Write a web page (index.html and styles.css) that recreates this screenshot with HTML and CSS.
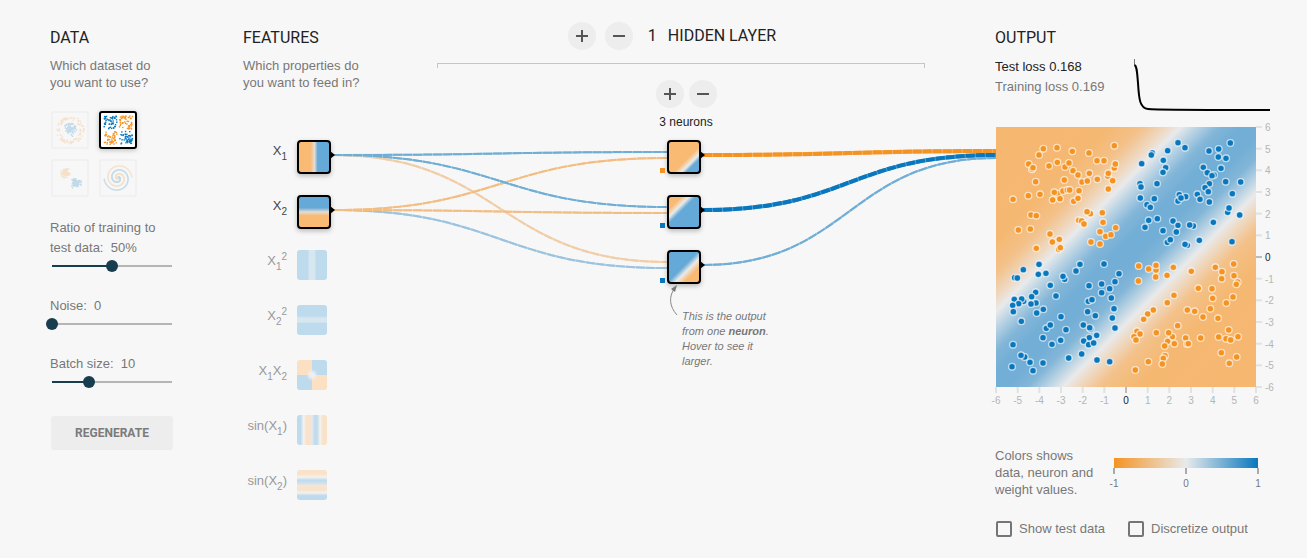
FILE: index.html
```html
<!DOCTYPE html>
<html lang="en">
<head>
<meta charset="utf-8">
<title>Neural network playground</title>
<link rel="stylesheet" href="styles.css">
</head>
<body>
<main class="playground">
  <section class="data">
    <h2>DATA</h2>
    <p class="hint">Which dataset do you want to use?</p>
    <div class="datasets">
      <button class="dataset" aria-label="Circle"><svg id="circle" viewBox="0 0 34 34"></svg></button>
      <button class="dataset selected" aria-label="Exclusive or"><svg id="xor" viewBox="0 0 34 34"></svg></button>
      <button class="dataset" aria-label="Gaussian"><svg id="gauss" viewBox="0 0 34 34"></svg></button>
      <button class="dataset" aria-label="Spiral"><svg id="spiral" viewBox="0 0 34 34"></svg></button>
    </div>
    <div class="sliders">
      <div class="slider">
        <label for="ratio">Ratio of training to test data:&nbsp; 50%</label>
        <input type="range" id="ratio" class="at-half" min="10" max="90" step="10" value="50">
      </div>
      <div class="slider">
        <label for="noise">Noise:&nbsp; 0</label>
        <input type="range" id="noise" class="at-zero" min="0" max="50" step="5" value="0">
      </div>
      <div class="slider">
        <label for="batch">Batch size:&nbsp; 10</label>
        <input type="range" id="batch" class="at-third" min="1" max="30" value="10">
      </div>
    </div>
    <button class="regenerate">REGENERATE</button>
  </section>

  <section class="network">
    <header class="features-head">
      <h2>FEATURES</h2>
      <p class="hint">Which properties do you want to feed in?</p>
    </header>
    <header class="layers-head">
      <div class="layer-count">
        <button class="round" aria-label="Add layer"><svg viewBox="0 0 28 28"><path d="M8 14H20M14 8V20"/></svg></button>
        <button class="round" aria-label="Remove layer"><svg viewBox="0 0 28 28"><path d="M8 14H20"/></svg></button>
        <h2>1</h2>
        <h2>HIDDEN LAYER</h2>
      </div>
      <div class="bracket"></div>
      <div class="neuron-count">
        <div class="neuron-buttons">
          <button class="round" aria-label="Add neuron"><svg viewBox="0 0 28 28"><path d="M8 14H20M14 8V20"/></svg></button>
          <button class="round" aria-label="Remove neuron"><svg viewBox="0 0 28 28"><path d="M8 14H20"/></svg></button>
        </div>
        <span>3 neurons</span>
      </div>
    </header>

    <ul class="features">
      <li class="active"><span>X<sub>1</sub></span><i class="node on x1"></i></li>
      <li class="active"><span>X<sub>2</sub></span><i class="node on x2"></i></li>
      <li><span>X<sub>1</sub><sup>2</sup></span><i class="node x1sq"></i></li>
      <li><span>X<sub>2</sub><sup>2</sup></span><i class="node x2sq"></i></li>
      <li><span>X<sub>1</sub>X<sub>2</sub></span><i class="node x1x2"></i></li>
      <li><span>sin(X<sub>1</sub>)</span><i class="node sin1"></i></li>
      <li><span>sin(X<sub>2</sub>)</span><i class="node sin2"></i></li>
    </ul>
    <svg class="links" viewBox="0 0 336 144" preserveAspectRatio="none">
      <defs>
        <g id="inputs">
          <path class="neg faint" d="M2 15C169 15 169 122 336 122"/>
          <path class="pos faint" d="M2 70C169 70 169 128 336 128"/>
          <path class="neg" d="M2 70C169 70 169 18 336 18"/>
          <path class="neg" d="M2 70C169 70 169 73 336 73"/>
          <path class="pos" d="M2 15C169 15 169 67 336 67"/>
          <path class="pos" d="M2 15C169 15 169 12 336 12"/>
        </g>
      </defs>
      <use class="base" href="#inputs"/>
      <use class="dashes" href="#inputs"/>
    </svg>
    <div class="neurons">
      <i class="node on n1"></i>
      <i class="node on n2 plus"></i>
      <i class="node on n3 plus"></i>
      <div class="callout">
        <svg viewBox="0 0 14 32"><path d="M10 31C2 22 2 13 7 5" fill="none" stroke="#888"/><path d="M10 1L4 5L8 8Z" fill="#777"/></svg>
        <p>This is the output from one <b>neuron</b>. Hover to see it larger.</p>
      </div>
    </div>
    <svg class="links" viewBox="0 0 294 144" preserveAspectRatio="none">
      <defs>
        <g id="outputs">
          <path class="pos" d="M2 125C148 125 148 18 295 18"/>
          <path class="pos strong" d="M2 70C148 70 148 15 295 15"/>
          <path class="neg strong" d="M2 15C148 15 148 11 295 11"/>
        </g>
      </defs>
      <use class="base" href="#outputs"/>
      <use class="dashes" href="#outputs"/>
    </svg>
  </section>

  <section class="output">
    <h2>OUTPUT</h2>
    <div class="metrics">
      <div class="losses">
        <div class="test">Test loss 0.168</div>
        <div>Training loss 0.169</div>
      </div>
      <svg class="chart" viewBox="0 0 138 54">
        <path d="M1.500 1V8" stroke="#777"/>
        <path d="M1.500 7C4 8 4 14 5 25C6 42 7 50 15 51C22 52 50 52 137 52" stroke="#000" stroke-width="2"/>
      </svg>
    </div>
    <svg class="heatmap" viewBox="0 0 280 280">
      <defs>
        <linearGradient id="field" x1="0" y1="0" x2="1" y2="1">
          <stop offset="0" stop-color="#f6b770"/>
          <stop offset=".22" stop-color="#f5b872"/>
          <stop offset=".28" stop-color="#f3c189"/>
          <stop offset=".33" stop-color="#eedac4"/>
          <stop offset=".355" stop-color="#e9eaeb"/>
          <stop offset=".385" stop-color="#bdd5e4"/>
          <stop offset=".43" stop-color="#83b6d8"/>
          <stop offset=".47" stop-color="#73aed6"/>
          <stop offset=".52" stop-color="#73aed6"/>
          <stop offset=".56" stop-color="#83b6d8"/>
          <stop offset=".6" stop-color="#bdd5e4"/>
          <stop offset=".628" stop-color="#e9eaeb"/>
          <stop offset=".655" stop-color="#eedac4"/>
          <stop offset=".7" stop-color="#f3c189"/>
          <stop offset=".77" stop-color="#f5b872"/>
          <stop offset="1" stop-color="#f6b770"/>
        </linearGradient>
      </defs>
      <rect width="260" height="260" fill="url(#field)"/>
      <g id="axes"></g>
      <g id="points" transform="scale(.333333)"></g>
    </svg>
    <div class="legend">
      <p>Colors shows data, neuron and weight values.</p>
      <div class="scale">
        <div class="bar"></div>
        <div class="ticks"><span>-1</span><span>0</span><span>1</span></div>
      </div>
    </div>
    <div class="options">
      <label><input type="checkbox">Show test data</label>
      <label><input type="checkbox">Discretize output</label>
    </div>
  </section>
</main>
<script src="script.js"></script>
</body>
</html>
```

FILE: styles.css
```css
* { box-sizing: border-box; }

body {
  margin: 0;
  background: #f7f7f7;
  color: #777;
  font: 13px/17px "Liberation Sans", Arial, sans-serif;
}

h2, p, ul { margin: 0; padding: 0; }

h2 {
  color: #222;
  font: 400 16px/20px Roboto, sans-serif;
}

button {
  border: 0;
  padding: 0;
  background: none;
  cursor: pointer;
}

button svg { display: block; width: 100%; }

.playground {
  display: grid;
  grid-template-columns: 123px minmax(600px, 1fr) 280px;
  padding: 22px 32px 16px 50px;
}

.data, .output, .features-head { padding-top: 6px; }

.hint {
  margin-top: 9px;
  width: 120px;
}

.datasets {
  display: grid;
  grid-template-columns: 38px 38px;
  gap: 10px;
  margin: 20px 0 21px 1px;
}

.dataset {
  border: 2px solid #ddd;
  border-radius: 3px;
  opacity: .22;
}

.dataset.selected {
  border-color: #000;
  background: #fff;
  opacity: 1;
  box-shadow: 0 1px 5px rgba(0, 0, 0, .25);
}

.sliders {
  display: grid;
  gap: 22px;
}

.slider { line-height: 20px; }

.slider label { display: block; }

.slider input {
  -webkit-appearance: none;
  appearance: none;
  display: block;
  width: 132px;
  height: 16px;
  margin: 0 -4px;
  background: no-repeat 6px 7px / 120px 2px;
}

.slider input::-webkit-slider-thumb {
  -webkit-appearance: none;
  width: 12px;
  height: 12px;
  border-radius: 50%;
  background: #183d4e;
}

.slider .at-half { background-image: linear-gradient(90deg, #183d4e 50%, #b5b5b5 50%); }
.slider .at-zero { background-image: linear-gradient(#b5b5b5, #b5b5b5); }
.slider .at-third { background-image: linear-gradient(90deg, #183d4e 31%, #b5b5b5 31%); }

.regenerate {
  width: 122px;
  height: 34px;
  margin: 26px 0 0 1px;
  border-radius: 3px;
  background: #ededed;
  color: #7b7b7b;
  font: 700 12px/34px Roboto, sans-serif;
}

.network {
  display: grid;
  grid-template-columns: 88px 336fr 34px 294fr;
  grid-template-rows: 118px auto;
  margin-left: 70px;
}

.features-head { grid-area: 1 / 1 / 2 / 3; }

.layers-head {
  grid-area: 1 / 2 / 2 / 5;
  margin: 0 70px 0 106px;
}

.layer-count {
  display: flex;
  justify-content: center;
  align-items: center;
  padding-right: 18px;
}

.layer-count .round + .round { margin-left: 9px; }
.layer-count .round + h2 { margin: 0 11px 0 15px; }

.round {
  width: 28px;
  height: 28px;
  border-radius: 50%;
  background: #ededed;
}

.round path {
  stroke: #555;
  stroke-width: 2;
}

.bracket {
  height: 5px;
  margin-top: 13px;
  border: 1px solid #c6c6c6;
  border-bottom: 0;
}

.neuron-count {
  display: flex;
  flex-direction: column;
  align-items: center;
  gap: 6px;
  margin-top: 12px;
  padding-left: 10px;
  color: #222;
  font-size: 12px;
}

.neuron-buttons {
  display: flex;
  gap: 5px;
}

.features {
  display: grid;
  grid-auto-rows: 34px;
  gap: 21px;
  list-style: none;
}

.features li {
  display: grid;
  grid-template-columns: 44px 34px;
  gap: 10px;
  color: #999;
  line-height: 22px;
  text-align: right;
  white-space: nowrap;
}

.features li.active { color: #444; }

sub, sup {
  font-size: 10px;
  line-height: 0;
}

sub { vertical-align: -5px; }
sup { vertical-align: 5px; }

.node {
  display: block;
  position: relative;
  width: 30px;
  height: 30px;
  border-radius: 3px;
}

.node.on {
  width: 34px;
  height: 34px;
  border: 2px solid #000;
  border-radius: 4px;
  background-origin: padding-box;
  box-shadow: 0 2px 5px rgba(0, 0, 0, .25);
}

.node.on::after {
  content: "";
  position: absolute;
  z-index: 1;
  top: 9px;
  right: -6px;
  width: 5px;
  height: 8px;
  background: #000;
  clip-path: polygon(0 0, 100% 50%, 0 100%);
}

.neurons .node::before {
  content: "";
  position: absolute;
  top: 26px;
  left: -9px;
  width: 5px;
  height: 5px;
  background: #f59322;
}

.neurons .node.plus::before { background: #0877bd; }

.x1 { background: linear-gradient(90deg, #f9ba74 38%, #e4ddd4 52%, #65a9d8 62%); }
.x2 { background: linear-gradient(#65a9d8 36%, #e4ddd4 50%, #f9ba74 62%); }
.x1sq { background: linear-gradient(90deg, #bedaed 36%, #d7e7f0 42%, #d7e7f0 58%, #bedaed 64%); }
.x2sq { background: linear-gradient(#bedaed 36%, #d7e7f0 44%, #d7e7f0 56%, #bedaed 62%); }
.x1x2 {
  background:
    radial-gradient(circle, #eef0f0 2px, rgba(238, 240, 240, 0) 6px),
    conic-gradient(#bedaed 25%, #fbe0c3 0 50%, #bedaed 0 75%, #fbe0c3 0);
}
.sin1 { background: linear-gradient(90deg, #bedaed 12%, #f1f3f3 22%, #fae2c9 32%, #fae2c9 42%, #e4e9ec 50%, #bedaed 60%, #c5ddec 68%, #f3f2ef 77%, #fae2c9 87%); }
.sin2 { background: linear-gradient(#fae2c9 13%, #f3f2ef 24%, #bedaed 34%, #d0e2ec 44%, #f5e5d5 52%, #fae2c9 66%, #f3f2ef 76%, #bedaed 86%); }
.n1 { background: linear-gradient(135deg, #f9ba74 58%, #eceae7 71%, #65a9d8 79%); }
.n2 { background: linear-gradient(135deg, #f9ba74 20%, #eceae7 33%, #65a9d8 44%); }
.n3 { background: linear-gradient(135deg, #65a9d8 48%, #eceae7 61%, #f9ba74 76%); }

.links {
  display: block;
  width: 100%;
  height: 144px;
  overflow: visible;
}

.links path {
  fill: none;
  stroke-width: 2;
  vector-effect: non-scaling-stroke;
}

.base { opacity: .7; }
.dashes { stroke-dasharray: 9 1; }

.pos { stroke: #6eadd5; }
.neg { stroke: #f3bd80; }
.pos.faint { stroke: #9cc3de; }
.neg.faint { stroke: #f1cda6; }
.links .strong { stroke-width: 4; }
.pos.strong { stroke: #0877bd; }
.neg.strong { stroke: #f59322; }

.neurons {
  display: grid;
  grid-auto-rows: 34px;
  gap: 21px;
  position: relative;
}

.callout {
  position: absolute;
  top: 144px;
  left: 0;
  width: 110px;
  font-size: 11px;
  font-style: italic;
  line-height: 15px;
}

.callout svg {
  display: block;
  width: 14px;
  height: 32px;
}

.callout p { margin: -7px 0 0 15px; }

.metrics {
  display: flex;
  justify-content: space-between;
  margin-top: 9px;
  padding-right: 4px;
  line-height: 20px;
}

.test { color: #222; }

.chart {
  width: 138px;
  height: 54px;
  margin-top: 1px;
  fill: none;
}

.heatmap {
  display: block;
  width: 280px;
  margin: 15px 0 0 1px;
  overflow: visible;
}

.tick { stroke: #e2e2e2; stroke-width: 2; }
.tick.zero { stroke: #bbb; }
.axis-label { fill: #b5b5b5; font-size: 10px; }
.axis-label.zero { fill: #222; }
.centered { text-anchor: middle; }

#points circle {
  stroke: #fff;
  stroke-opacity: .65;
  stroke-width: 4;
}

.blue { fill: #0877bd; }
.orange { fill: #f59322; }

.legend {
  display: grid;
  grid-template-columns: 104px 144px;
  gap: 15px;
  margin-top: 40px;
}

.scale { padding-top: 11px; }

.bar {
  height: 10px;
  background: linear-gradient(90deg, #f59322, #e8eaeb, #0877bd);
}

.ticks {
  display: flex;
  justify-content: space-between;
  font-size: 10px;
  line-height: 20px;
}

.ticks span {
  display: flex;
  flex-direction: column;
  align-items: center;
  width: 0;
}

.ticks span::before {
  content: "";
  width: 2px;
  height: 6px;
  background: #aaa;
}

.options {
  display: flex;
  gap: 22px;
  margin-top: 22px;
}

.options label {
  display: flex;
  align-items: center;
  gap: 7px;
  white-space: nowrap;
}

.options input {
  -webkit-appearance: none;
  appearance: none;
  width: 16px;
  height: 16px;
  margin: 0 0 0 1px;
  border: 2px solid #757575;
  border-radius: 2px;
}
```

FILE: script.js
```js
const NS = "http://www.w3.org/2000/svg";

function add(parent, name, attrs, text) {
  const el = document.createElementNS(NS, name);
  for (const key in attrs) el.setAttribute(key, attrs[key]);
  if (text !== undefined) el.textContent = text;
  parent.appendChild(el);
}

// Axis ticks and labels, -6 to 6 in both directions.
const axes = document.getElementById("axes");
for (let v = -6; v <= 6; v++) {
  const pos = (v + 6) * 260 / 12;
  const zero = v === 0 ? " zero" : "";
  add(axes, "path", { class: "tick" + zero, d: `M${pos} 260v6` });
  add(axes, "path", { class: "tick" + zero, d: `M260 ${260 - pos}h6` });
  add(axes, "text", { class: "axis-label centered" + zero, x: pos, y: 277 }, v);
  add(axes, "text", { class: "axis-label" + zero, x: 269, y: 264 - pos }, v);
}

// Training points by quadrant: colour, origin, then x,y pairs.
const quadrants = [
  ["orange", -18, -21, "160,86 201,83 147,105 247,94 297,99 373,77 116,132 126,148 129,143 177,138 202,127 225,141 237,129 249,152 264,165 298,160 321,122 342,122 373,144 376,132 353,168 355,160 368,182 322,178 276,186 292,183 223,180 137,185 69,238 115,227 150,223 204,221 193,217 219,213 232,210 239,210 267,212 210,236 188,240 251,244 264,235 355,207 123,285 139,287 85,330 121,327 180,342 187,366 208,358 206,388 211,383 139,385 301,281 291,275 337,278 266,301 275,303 282,312 339,307 377,323 330,335 347,349 363,344 303,366 330,372"],
  ["blue", -18, 399, "147,13 270,13 342,12 100,29 145,43 168,40 74,53 82,54 258,33 224,58 219,49 387,41 375,65 181,76 297,77 335,72 359,86 335,98 137,97 125,110 73,118 101,124 95,117 86,131 68,136 138,129 123,132 198,108 295,124 306,119 364,114 70,155 140,159 160,148 293,155 372,146 316,167 213,170 367,174 94,184 169,205 181,195 280,195 302,207 299,203 375,204 228,209 320,226 298,233 159,233 212,241 281,243 296,254 311,249 186,253 69,254 275,282 104,291 93,286 120,307 159,309 236,294 321,300 359,305 66,320 129,332"],
  ["blue", 372, -21, "174,68 195,83 143,92 97,99 94,105 65,131 130,121 137,143 129,157 267,93 296,87 331,69 295,111 318,115 250,142 303,145 262,158 282,165 276,167 268,191 317,185 362,186 255,203 265,215 337,221 60,191 63,201 111,191 61,234 103,236 81,254 91,262 178,224 197,230 174,243 183,234 232,223 240,238 268,246 323,277 327,264 359,285 86,301 112,296 75,322 159,303 174,316 129,332 169,336 220,318 209,315 280,307 142,367 151,359 238,361 202,376 195,373 336,365"],
  ["orange", 372, 399, "56,18 86,27 108,30 108,16 107,51 55,63 141,46 160,22 214,34 286,22 306,35 341,12 305,56 342,47 353,66 349,73 235,85 276,86 162,106 278,115 339,111 142,128 319,129 271,146 202,150 224,154 100,150 83,162 71,178 249,171 294,175 173,197 51,214 60,222 42,230 48,240 109,218 157,230 146,218 143,244 134,258 163,251 197,234 201,252 205,251 242,234 326,210 296,231 318,236 332,240 354,230 304,278 328,310 350,291 135,287 130,295 127,312 85,305 46,330"]
];
const points = document.getElementById("points");
for (const [color, dx, dy, list] of quadrants) {
  for (const pair of list.split(" ")) {
    const [x, y] = pair.split(",").map(Number);
    add(points, "circle", { class: color, cx: x + dx, cy: y + dy, r: 10 });
  }
}

// Dataset thumbnails, drawn from a seeded generator.
let seed = 7;
function rand() {
  seed = (seed * 16807) % 2147483647;
  return seed / 2147483647;
}
function speck(id, color, x, y) {
  add(document.getElementById(id), "rect", { class: color, x: x - 0.7, y: y - 0.7, width: 1.4, height: 1.4 });
}
for (let i = 0; i < 90; i++) {
  const a = rand() * 2 * Math.PI;
  const inner = rand() * 7;
  speck("circle", "blue", 17 + inner * Math.cos(a), 17 + inner * Math.sin(a));
  const b = rand() * 2 * Math.PI;
  const outer = 10 + rand() * 4;
  speck("circle", "orange", 17 + outer * Math.cos(b), 17 + outer * Math.sin(b));
}
for (let i = 0; i < 50; i++) {
  for (const [color, x, y] of [["blue", 3, 3], ["orange", 18.5, 3], ["orange", 3, 18.5], ["blue", 18.5, 18.5]]) {
    speck("xor", color, x + rand() * 13, y + rand() * 13);
  }
}
for (let i = 0; i < 90; i++) {
  const spread = () => (rand() + rand() + rand() - 1.5) * 4;
  speck("gauss", "orange", 12 + spread(), 12 + spread());
  speck("gauss", "blue", 23 + spread(), 22 + spread());
}
for (let i = 0; i < 110; i++) {
  const r = i / 110 * 14;
  const t = 1.75 * i / 110 * 2 * Math.PI;
  speck("spiral", "blue", 17 + r * Math.sin(t), 17 - r * Math.cos(t));
  speck("spiral", "orange", 17 - r * Math.sin(t), 17 + r * Math.cos(t));
}
```
